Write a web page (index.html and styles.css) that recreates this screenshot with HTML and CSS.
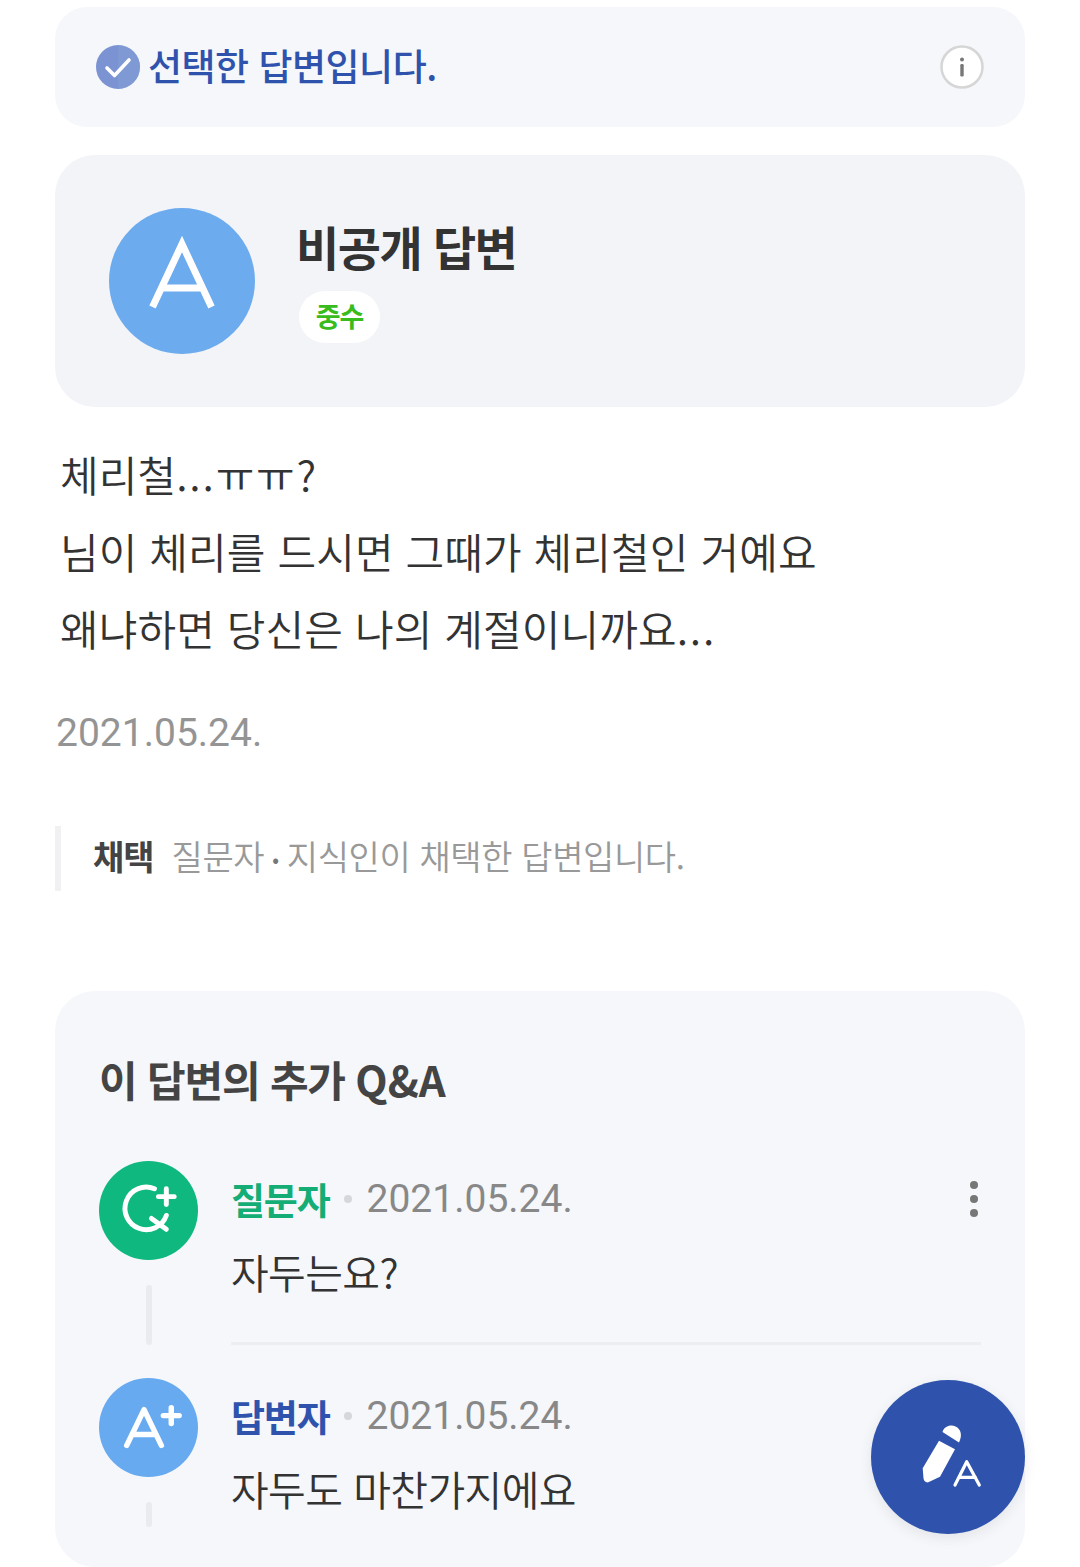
FILE: index.html
```html
<!DOCTYPE html>
<html lang="ko">
<head>
<meta charset="utf-8">
<title>답변</title>
<link rel="stylesheet" href="styles.css">
</head>
<body>
<main class="page">
  <section class="selected">
    <svg class="check" viewBox="0 0 44 44"><circle cx="22" cy="22" r="22" fill="#7b93d2"/><path d="M22 0a22 22 0 0 1 0 44z" fill="#84a0d8" opacity=".5"/><path d="M11 23l7.500 7.500L33 15" fill="none" stroke="#fff" stroke-width="3.600" stroke-linecap="round" stroke-linejoin="round"/></svg>
    <span class="selected-text">선택한 답변입니다.</span>
    <svg class="info" viewBox="0 0 44 44"><circle cx="22" cy="22" r="20.500" fill="#fff" stroke="#d6d6d6" stroke-width="2.500"/><circle cx="22" cy="14.500" r="2" fill="#777"/><rect x="20.300" y="19" width="3.400" height="12.500" rx="1.200" fill="#777"/></svg>
  </section>

  <section class="profile">
    <div class="avatar">
      <svg viewBox="0 0 146 146"><path d="M43.500 99L73 36l29.500 63M51 80h44" fill="none" stroke="#fff" stroke-width="7" stroke-linejoin="miter"/></svg>
    </div>
    <div class="profile-info">
      <h2 class="profile-name">비공개 답변</h2>
      <span class="badge">중수</span>
    </div>
  </section>

  <article class="answer">
    <p>체리철<span class="wide">...ㅠㅠ?</span></p>
    <p>님이 체리를 드시면 그때가 체리철인 거예요</p>
    <p>왜냐하면 당신은 나의 계절이니까요<span class="wide">...</span></p>
  </article>

  <div class="date">2021.05.24.</div>

  <div class="adopted">
    <strong>채택</strong>
    <span>질문자 <b class="sep">•</b> 지식인이 채택한 답변입니다.</span>
  </div>

  <section class="qa">
    <h3 class="qa-title">이 답변의 추가 <span class="latin">Q&amp;A</span></h3>

    <div class="item">
      <div class="side">
        <svg class="icon" viewBox="0 0 100 100"><circle cx="50" cy="50" r="50" fill="#0fb87f"/><path d="M56 28A21.500 21.500 0 1 0 68 55" fill="none" stroke="#fff" stroke-width="5" stroke-linecap="round"/><path d="M53 58l15 11M68 28v16M60 36h16" fill="none" stroke="#fff" stroke-width="5" stroke-linecap="round"/></svg>
        <i class="thread"></i>
      </div>
      <div class="body ruled">
        <div class="meta"><span class="who who-q">질문자</span><i class="dot"></i><span class="when">2021.05.24.</span>
          <svg class="more" viewBox="0 0 10 38"><circle cx="5" cy="5" r="4" fill="#777"/><circle cx="5" cy="19" r="4" fill="#777"/><circle cx="5" cy="33" r="4" fill="#777"/></svg>
        </div>
        <p class="msg">자두는요?</p>
      </div>
    </div>

    <div class="item">
      <div class="side">
        <svg class="icon" viewBox="0 0 100 100"><circle cx="50" cy="50" r="50" fill="#68aaf0"/><path d="M28 68L45.500 32 63 68M34 57h23" fill="none" stroke="#fff" stroke-width="5.500" stroke-linecap="round" stroke-linejoin="round"/><path d="M73 30v16M65 38h16" fill="none" stroke="#fff" stroke-width="5.500" stroke-linecap="round"/></svg>
        <i class="thread thread-short"></i>
      </div>
      <div class="body">
        <div class="meta"><span class="who who-a">답변자</span><i class="dot"></i><span class="when">2021.05.24.</span></div>
        <p class="msg">자두도 마찬가지에요</p>
      </div>
    </div>
  </section>
</main>

<button class="fab" aria-label="답변 쓰기">
  <svg viewBox="0 0 154 154"><path d="M71.500 52C73 46 80 44 84.500 46.500 90 49 91 55 89 60L88 62.500zM68 60.700L84 69.300 69 96.700 57.300 102.300C55 103 52.800 101 52.500 98.300L51.700 88.300z" fill="#fff"/><path d="M84 105L95.700 81.700 108.300 105M88 97.300h16.500" fill="none" stroke="#fff" stroke-width="3.200" stroke-linecap="round" stroke-linejoin="round"/></svg>
</button>
</body>
</html>
```
FILE: styles.css
```css
* { box-sizing: border-box; }
html, body { margin: 0; padding: 0; }
body {
  position: relative;
  width: 1080px;
  height: 1567px;
  overflow: hidden;
  background: #fff;
  font-family: "Noto Sans CJK KR", "Noto Sans", sans-serif;
  color: #333;
}
.page { padding: 7px 55px 0; display: flex; flex-direction: column; }
p, h2, h3 { margin: 0; font-weight: 400; }

.selected {
  height: 120px;
  background: #f5f7fa;
  border-radius: 32px;
  padding: 0 41px;
  display: flex;
  align-items: center;
}
.check { width: 44px; height: 44px; flex: none; }
.selected-text {
  margin-left: 8px;
  font-size: 37px;
  font-weight: 500;
  letter-spacing: -0.500px;
  color: #2f53ad;
  flex: 1;
  line-height: 1;
  margin-top: -4px;
}
.info { width: 44px; height: 44px; flex: none; }

.profile {
  margin-top: 28px;
  height: 252px;
  background: #f2f4f8;
  border-radius: 40px;
  padding: 0 54px;
  display: flex;
  align-items: center;
}
.avatar {
  width: 146px;
  height: 146px;
  border-radius: 50%;
  background: #6cabed;
  flex: none;
  overflow: hidden;
}
.avatar svg { display: block; width: 100%; height: 100%; }
.profile-info { margin-left: 41px; display: flex; flex-direction: column; align-items: flex-start; gap: 13px; margin-top: -5px; }
.profile-name { font-size: 47px; font-weight: 700; letter-spacing: -1.500px; line-height: 64px; color: #333; }
.badge {
  margin-left: 3px;
  width: 81px;
  height: 52px;
  padding-bottom: 4px;
  border-radius: 26px;
  background: #fff;
  color: #38bb1c;
  font-size: 27px;
  font-weight: 700;
  letter-spacing: -1px;
  display: flex;
  align-items: center;
  justify-content: center;
}

.answer { margin-top: 28px; padding-left: 5px; }
.answer p { font-size: 42px; line-height: 77px; color: #333; font-weight: 350; letter-spacing: 0.100px; }
.wide { letter-spacing: 1.800px; }

.date { margin-top: 42px; font-family: "Roboto", sans-serif; font-size: 39px; line-height: 50px; color: #949494; padding-left: 1px; }

.adopted {
  margin-top: 68px;
  height: 65px;
  border-left: 6px solid #f1f1f3;
  padding: 0 0 6px 32px;
  display: flex;
  align-items: center;
  gap: 18px;
  font-size: 34px;
}
.adopted strong { font-weight: 700; color: #444; letter-spacing: -1px; }
.adopted span { color: #999; font-weight: 350; letter-spacing: -0.400px; }
.sep { font-size: 20px; color: #777; font-weight: 400; margin: 0 -1px; position: relative; top: -3px; }

.qa {
  margin-top: 100px;
  height: 576px;
  background: #f5f7fa;
  border-radius: 40px;
  padding: 58px 44px 0;
}
.qa-title { font-size: 42px; font-weight: 700; letter-spacing: -1.200px; line-height: 60px; color: #444; }
.latin { letter-spacing: 0; }
.item { display: flex; gap: 33px; }
.item + .item { margin-top: 33px; }
.qa-title + .item { margin-top: 52px; }
.side { width: 99px; flex: none; display: flex; flex-direction: column; align-items: center; }
.icon { display: block; width: 99px; height: 99px; }
.thread { display: block; width: 6px; height: 60px; margin-top: 25px; background: #eaebef; border-radius: 3px; }
.thread-short { height: 25px; }
.body { flex: 1; min-width: 0; }
.ruled { border-bottom: 3px solid #eceef1; height: 184px; }
.meta { display: flex; align-items: center; height: 76px; }
.who { font-size: 37px; font-weight: 700; letter-spacing: -1.200px; }
.who-q { color: #14ad76; }
.who-a { color: #2f53ad; }
.dot { width: 8px; height: 8px; border-radius: 50%; background: #d5d7da; margin: 0 15px 0 14px; }
.when { font-family: "Roboto", sans-serif; font-size: 39px; color: #888; }
.more { width: 10px; height: 38px; margin-left: auto; margin-right: 2px; }
.msg { font-size: 41px; line-height: 70px; letter-spacing: -0.600px; color: #333; font-weight: 350; margin-top: -1px; }

.fab {
  position: absolute;
  left: 871px;
  top: 1380px;
  width: 154px;
  height: 154px;
  border: 0;
  padding: 0;
  border-radius: 50%;
  background: #2f53ad;
  box-shadow: 0 4px 14px rgba(0,0,0,.08);
}
.fab svg { display: block; width: 100%; height: 100%; }
```
